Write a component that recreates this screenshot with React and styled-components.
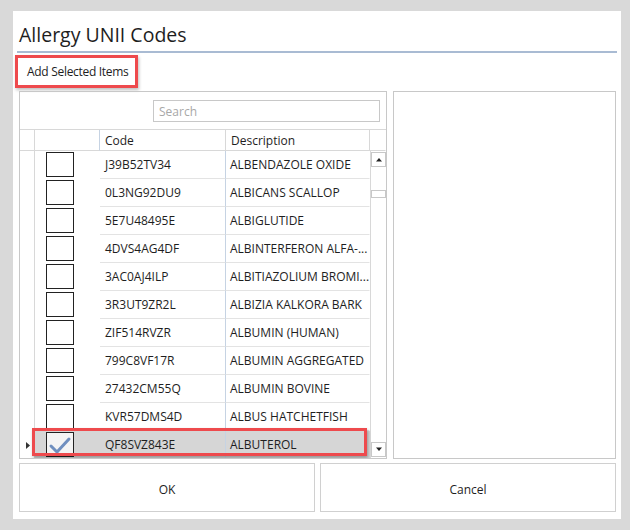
import React from "react";
import styled, { createGlobalStyle } from "styled-components";

const Global = createGlobalStyle`
  html, body { margin: 0; padding: 0; background: #d9d9d9; }
  body { font-family: "Open Sans", "Noto Sans", sans-serif; color: #1e1e1e; }
  * { box-sizing: border-box; }
`;

const Page = styled.div`
  width: 630px;
  height: 530px;
  padding: 11px 9px 11px 13px;
`;

const Window = styled.div`
  width: 608px;
  height: 508px;
  background: #fff;
  display: flex;
  flex-direction: column;
  padding: 0 5px 6px 6px;
`;

const Title = styled.div`
  font-size: 19.5px;
  line-height: 24px;
  padding: 12px 0 4px 2px;
  border-bottom: 2px solid #a9bbd3;
  margin: 0 0 0 -2px;
  width: 600px;
`;

const Toolbar = styled.div`
  height: 38px;
  display: flex;
  align-items: flex-start;
  padding-top: 2px;
  margin-left: -4px;
`;

const ToolButton = styled.div`
  height: 33px;
  display: flex;
  align-items: center;
  padding: 0 6px 0 9px;
  font-size: 12px;
  letter-spacing: -0.3px;
  border: 3px solid #ee4a4d;
  box-shadow: 1px 2px 3px rgba(0, 0, 0, 0.25);
`;

const Panels = styled.div`
  display: flex;
  gap: 6px;
  height: 368px;
`;

const GridPanel = styled.div`
  width: 368px;
  border: 1px solid #c8c8c8;
  display: flex;
  flex-direction: column;
  overflow: hidden;
`;

const SideList = styled.div`
  width: 223px;
  border: 1px solid #c8c8c8;
`;

const SearchBar = styled.div`
  height: 38px;
  flex: none;
  display: flex;
  justify-content: flex-end;
  align-items: flex-start;
  padding: 8px 6px 0 0;
  border-bottom: 1px solid #d8d8d8;
`;

const SearchBox = styled.div`
  width: 227px;
  height: 22px;
  border: 1px solid #c8c8c8;
  font-size: 12px;
  color: #a8a8a8;
  padding: 2px 0 0 5px;
`;

const Table = styled.div`
  flex: none;
  display: grid;
  grid-template-columns: 15px 65px 126px 144px 16px;
  grid-template-rows: 21px repeat(11, 28px);
  position: relative;
`;

const HeadCell = styled.div`
  font-size: 12px;
  padding: 2px 0 0 5px;
  border-bottom: 1px solid #d8d8d8;
  border-right: 1px solid ${(p) => (p.$blue ? "#c6d3e3" : p.$none ? "transparent" : "#d8d8d8")};
`;

const RowHead = styled.div`
  border-right: 1px solid #d8d8d8;
  display: flex;
  align-items: center;
  justify-content: flex-end;
  padding-right: 4px;
`;

const CheckCell = styled.div`
  display: flex;
  align-items: flex-start;
  justify-content: flex-start;
  padding: 1px 0 0 11px;
  background: ${(p) => (p.$sel ? "#d6d6d6" : "transparent")};
`;

const Box = styled.div`
  width: 28px;
  height: 25px;
  border: 1px solid #222;
  background: ${(p) => (p.$sel ? "#f4f4f4" : "#fff")};
  display: flex;
  align-items: center;
  justify-content: center;
`;

const Cell = styled.div`
  font-size: 12px;
  display: flex;
  align-items: center;
  padding-left: ${(p) => (p.$code ? "5px" : "4px")};
  border-right: 1px solid ${(p) => (p.$blue ? "#c6d3e3" : "transparent")};
  border-bottom: 1px solid ${(p) => (p.$sel ? "transparent" : "#e3e3e3")};
  background: ${(p) => (p.$sel ? "#d6d6d6" : "transparent")};
  white-space: nowrap;
  overflow: hidden;
`;

const ScrollCol = styled.div`
  grid-column: 5;
  grid-row: 2 / span 11;
  border-left: 1px solid #d8d8d8;
  display: flex;
  flex-direction: column;
  align-items: center;
  padding: 1px 0 2px;
`;

const ScrollBtn = styled.div`
  width: 15px;
  height: 15px;
  border: 1px solid #c8c8c8;
  display: flex;
  align-items: center;
  justify-content: center;
`;

const Thumb = styled.div`
  width: 15px;
  height: 8px;
  border: 1px solid #c8c8c8;
  margin-top: 23px;
`;

const Spacer = styled.div`
  flex: 1;
`;

const SelectOutline = styled.div`
  position: absolute;
  left: 12px;
  top: 298px;
  width: 335px;
  height: 28px;
  border: 3px solid #ee4a4d;
  box-shadow: 1px 2px 3px rgba(0, 0, 0, 0.3);
  pointer-events: none;
`;

const Buttons = styled.div`
  display: flex;
  gap: 5px;
  margin-top: 4px;
  height: 49px;
`;

const Button = styled.div`
  flex: 1;
  border: 1px solid #d0d0d0;
  display: flex;
  align-items: center;
  justify-content: center;
  padding-top: 3px;
  font-size: 12px;
`;

const rows = [
  ["J39B52TV34", "ALBENDAZOLE OXIDE"],
  ["0L3NG92DU9", "ALBICANS SCALLOP"],
  ["5E7U48495E", "ALBIGLUTIDE"],
  ["4DVS4AG4DF", "ALBINTERFERON ALFA-..."],
  ["3AC0AJ4ILP", "ALBITIAZOLIUM BROMI..."],
  ["3R3UT9ZR2L", "ALBIZIA KALKORA BARK"],
  ["ZIF514RVZR", "ALBUMIN (HUMAN)"],
  ["799C8VF17R", "ALBUMIN AGGREGATED"],
  ["27432CM55Q", "ALBUMIN BOVINE"],
  ["KVR57DMS4D", "ALBUS HATCHETFISH"],
  ["QF8SVZ843E", "ALBUTEROL"],
];

const Check = () => (
  <svg width="24" height="20" viewBox="0 0 24 20">
    <path d="M3 11 L9 17 L21 4" fill="none" stroke="#6f8fbf" strokeWidth="3" strokeLinejoin="round" strokeLinecap="round" />
  </svg>
);

const Tri = ({ up }) => (
  <svg width="8" height="5" viewBox="0 0 8 5">
    <path d={up ? "M1 4.5 L4 1 L7 4.5 Z" : "M1 0.5 L4 4 L7 0.5 Z"} fill="#222" />
  </svg>
);

const RowArrow = () => (
  <svg width="4" height="7" viewBox="0 0 4 7">
    <path d="M0 0 L4 3.5 L0 7 Z" fill="#333" />
  </svg>
);

export default function App() {
  return (
    <>
      <Global />
      <Page>
        <Window>
          <Title>Allergy UNII Codes</Title>
          <Toolbar>
            <ToolButton>Add Selected Items</ToolButton>
          </Toolbar>
          <Panels>
            <GridPanel>
              <SearchBar>
                <SearchBox>Search</SearchBox>
              </SearchBar>
              <Table>
                <HeadCell />
                <HeadCell $blue />
                <HeadCell>Code</HeadCell>
                <HeadCell>Description</HeadCell>
                <HeadCell $none />
                {rows.map(([code, desc], i) => {
                  const sel = i === rows.length - 1;
                  const pos = { gridRow: i + 2 };
                  return (
                    <React.Fragment key={code}>
                      <RowHead style={pos}>{sel && <RowArrow />}</RowHead>
                      <CheckCell $sel={sel} style={pos}>
                        <Box $sel={sel}>{sel && <Check />}</Box>
                      </CheckCell>
                      <Cell $code $blue $sel={sel} style={pos}>
                        {code}
                      </Cell>
                      <Cell $sel={sel} style={pos}>
                        {desc}
                      </Cell>
                    </React.Fragment>
                  );
                })}
                <ScrollCol>
                  <ScrollBtn>
                    <Tri up />
                  </ScrollBtn>
                  <Thumb />
                  <Spacer />
                  <ScrollBtn>
                    <Tri />
                  </ScrollBtn>
                </ScrollCol>
                <SelectOutline />
              </Table>
            </GridPanel>
            <SideList />
          </Panels>
          <Buttons>
            <Button>OK</Button>
            <Button>Cancel</Button>
          </Buttons>
        </Window>
      </Page>
    </>
  );
}
